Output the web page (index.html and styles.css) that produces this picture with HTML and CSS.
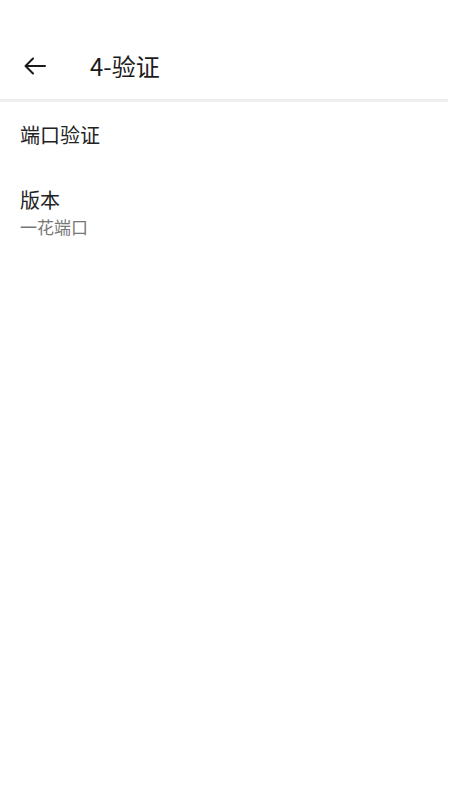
FILE: index.html
```html
<!DOCTYPE html>
<html>
<head>
<meta charset="utf-8">
<link rel="stylesheet" href="styles.css">
</head>
<body>
<div class="app">
  <header class="bar">
    <span class="back">
      <svg width="24" height="24" viewBox="0 0 24 24"><path d="M22 12H3M10 4.5L2.5 12l7.5 7.5" fill="none" stroke="#1a1a1a" stroke-width="2" stroke-linecap="round" stroke-linejoin="round"/></svg>
    </span>
    <span class="title">4-验证</span>
  </header>
  <div class="divider"></div>
  <div class="item first">
    <div class="item-title">端口验证</div>
  </div>
  <div class="item">
    <div class="item-title">版本</div>
    <div class="item-sub">一花端口</div>
  </div>
</div>
</body>
</html>
```
FILE: styles.css
```css
html, body {
  margin: 0;
  padding: 0;
  background: #fff;
}
body {
  font-family: "Noto Sans CJK SC", "Noto Sans", sans-serif;
  color: #1f1f1f;
}
.app {
  width: 450px;
  min-height: 800px;
}
.bar {
  height: 99px;
  display: flex;
  align-items: center;
  padding: 32px 0 0 23px;
  box-sizing: border-box;
}
.back {
  width: 24px;
  height: 24px;
  display: flex;
}
.title {
  margin-left: 43px;
  font-size: 24px;
  line-height: 1;
  color: #1a1a1a;
}
.divider {
  height: 3px;
  background: #eeeeee;
  margin-right: 2px;
}
.item {
  padding: 0 20px;
}
.item.first {
  padding-top: 17.5px;
}
.item-title {
  font-size: 20px;
  line-height: 29px;
  color: #222;
}
.item + .item {
  margin-top: 36px;
}
.item-sub {
  font-size: 17px;
  line-height: 25px;
  color: #777;
}
```
